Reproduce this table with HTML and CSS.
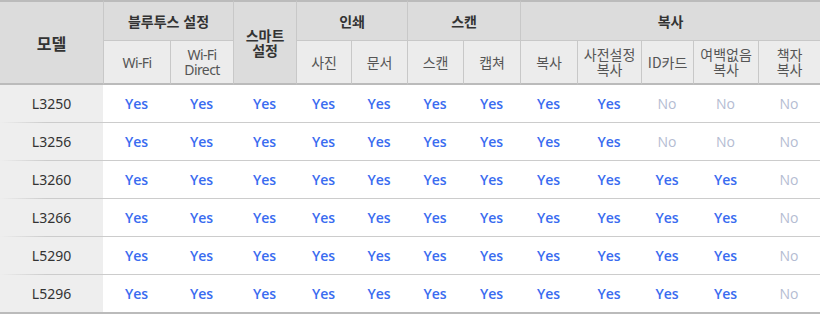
FILE: index.html
```html
<!DOCTYPE html>
<html lang="ko">
<head>
<meta charset="utf-8">
<title>모델 기능 비교</title>
<link rel="stylesheet" href="styles.css">
</head>
<body>
<table class="spec">
  <colgroup>
    <col class="c-model">
    <col class="c-wifi">
    <col class="c-direct">
    <col class="c-smart">
    <col class="c-photo">
    <col class="c-doc">
    <col class="c-scan">
    <col class="c-capture">
    <col class="c-copy">
    <col class="c-preset">
    <col class="c-id">
    <col class="c-border">
    <col class="c-book">
  </colgroup>
  <thead>
    <tr class="h1">
      <th rowspan="2" class="model-h first">모델</th>
      <th colspan="2">블루투스 설정</th>
      <th rowspan="2" class="span2 smart">스마트<br>설정</th>
      <th colspan="2">인쇄</th>
      <th colspan="2">스캔</th>
      <th colspan="5">복사</th>
    </tr>
    <tr class="h2">
      <th class="sub lat">Wi-Fi</th>
      <th class="sub lat two">Wi-Fi<br>Direct</th>
      <th class="sub">사진</th>
      <th class="sub">문서</th>
      <th class="sub">스캔</th>
      <th class="sub">캡쳐</th>
      <th class="sub">복사</th>
      <th class="sub two">사전설정<br>복사</th>
      <th class="sub">ID카드</th>
      <th class="sub two">여백없음<br>복사</th>
      <th class="sub two">책자<br>복사</th>
    </tr>
  </thead>
  <tbody>
    <tr>
      <td class="model">L3250</td>
      <td class="y">Yes</td><td class="y">Yes</td><td class="y">Yes</td><td class="y">Yes</td><td class="y">Yes</td><td class="y">Yes</td><td class="y">Yes</td><td class="y">Yes</td><td class="y">Yes</td><td class="n">No</td><td class="n">No</td><td class="n">No</td>
    </tr>
    <tr>
      <td class="model">L3256</td>
      <td class="y">Yes</td><td class="y">Yes</td><td class="y">Yes</td><td class="y">Yes</td><td class="y">Yes</td><td class="y">Yes</td><td class="y">Yes</td><td class="y">Yes</td><td class="y">Yes</td><td class="n">No</td><td class="n">No</td><td class="n">No</td>
    </tr>
    <tr>
      <td class="model">L3260</td>
      <td class="y">Yes</td><td class="y">Yes</td><td class="y">Yes</td><td class="y">Yes</td><td class="y">Yes</td><td class="y">Yes</td><td class="y">Yes</td><td class="y">Yes</td><td class="y">Yes</td><td class="y">Yes</td><td class="y">Yes</td><td class="n">No</td>
    </tr>
    <tr>
      <td class="model">L3266</td>
      <td class="y">Yes</td><td class="y">Yes</td><td class="y">Yes</td><td class="y">Yes</td><td class="y">Yes</td><td class="y">Yes</td><td class="y">Yes</td><td class="y">Yes</td><td class="y">Yes</td><td class="y">Yes</td><td class="y">Yes</td><td class="n">No</td>
    </tr>
    <tr>
      <td class="model">L5290</td>
      <td class="y">Yes</td><td class="y">Yes</td><td class="y">Yes</td><td class="y">Yes</td><td class="y">Yes</td><td class="y">Yes</td><td class="y">Yes</td><td class="y">Yes</td><td class="y">Yes</td><td class="y">Yes</td><td class="y">Yes</td><td class="n">No</td>
    </tr>
    <tr class="last">
      <td class="model">L5296</td>
      <td class="y">Yes</td><td class="y">Yes</td><td class="y">Yes</td><td class="y">Yes</td><td class="y">Yes</td><td class="y">Yes</td><td class="y">Yes</td><td class="y">Yes</td><td class="y">Yes</td><td class="y">Yes</td><td class="y">Yes</td><td class="n">No</td>
    </tr>
  </tbody>
</table>
</body>
</html>
```

FILE: styles.css
```css
html, body {
  margin: 0;
  padding: 0;
  background: #ffffff;
}

.spec {
  width: 820px;
  table-layout: fixed;
  border-collapse: separate;
  border-spacing: 0;
  font-family: "Noto Sans", "Noto Sans CJK KR", sans-serif;
  color: #333;
}

.c-model { width: 103px; }
.c-wifi { width: 67px; }
.c-direct { width: 63px; }
.c-smart { width: 63px; }
.c-photo { width: 55px; }
.c-doc { width: 56px; }
.c-scan { width: 56px; }
.c-capture { width: 57px; }
.c-copy { width: 57px; }
.c-preset { width: 64px; }
.c-id { width: 52px; }
.c-border { width: 65px; }
.c-book { width: 62px; }

.spec th {
  padding: 0;
  text-align: center;
  vertical-align: middle;
  font-family: "Noto Sans CJK KR", sans-serif;
}

.h1 { height: 41px; }
.h2 { height: 44px; }

.h1 th {
  background: #dcdcdc;
  border-top: 2px solid #bbbbbb;
  border-bottom: 1px solid #c8c8c8;
  border-left: 1px solid #c8c8c8;
  font-size: 14px;
  font-weight: 700;
  color: #333;
}

.h1 th.first {
  border-left: 0;
}

.h1 th.model-h,
.h1 th.span2 {
  border-bottom: 2px solid #bbbbbb;
}

.h1 th.model-h {
  font-size: 16px;
  font-weight: 700;
}

.h1 th.smart {
  vertical-align: top;
  line-height: 15px;
  padding-top: 26px;
}

.h2 th.sub {
  background: #ececec;
  border-bottom: 2px solid #bbbbbb;
  border-left: 1px solid #c8c8c8;
  font-size: 14px;
  font-weight: 400;
  color: #555;
  line-height: 15px;
}

.h2 th.lat {
  font-family: "Noto Sans", "Noto Sans CJK KR", sans-serif;
  letter-spacing: -0.6px;
}

.spec tbody tr {
  height: 38px;
}

.spec tbody tr.last {
  height: 39px;
}

.spec td {
  padding: 0;
  text-align: center;
  vertical-align: middle;
  border-bottom: 1px solid #cccccc;
  font-size: 14px;
}

.spec tr.last td {
  border-bottom: 2px solid #bbbbbb;
}

.spec td.model {
  font-family: "Noto Sans", sans-serif;
  font-size: 14px;
  color: #333;
  border-bottom-color: transparent;
  background: linear-gradient(to right, #eeeeee 0%, #cccccc 45%, #cccccc 100%) left bottom / 100% 1px no-repeat border-box, #eeeeee;
}

.spec tr.last td.model {
  border-bottom-color: #bbbbbb;
  background: #eeeeee;
}

.spec td.y {
  font-family: "Open Sans", "Noto Sans", sans-serif;
  color: #3a6cf0;
  font-weight: 600;
}

.spec td.n {
  font-family: "Open Sans", "Noto Sans", sans-serif;
  color: #b4bcd2;
  font-weight: 400;
}
```
